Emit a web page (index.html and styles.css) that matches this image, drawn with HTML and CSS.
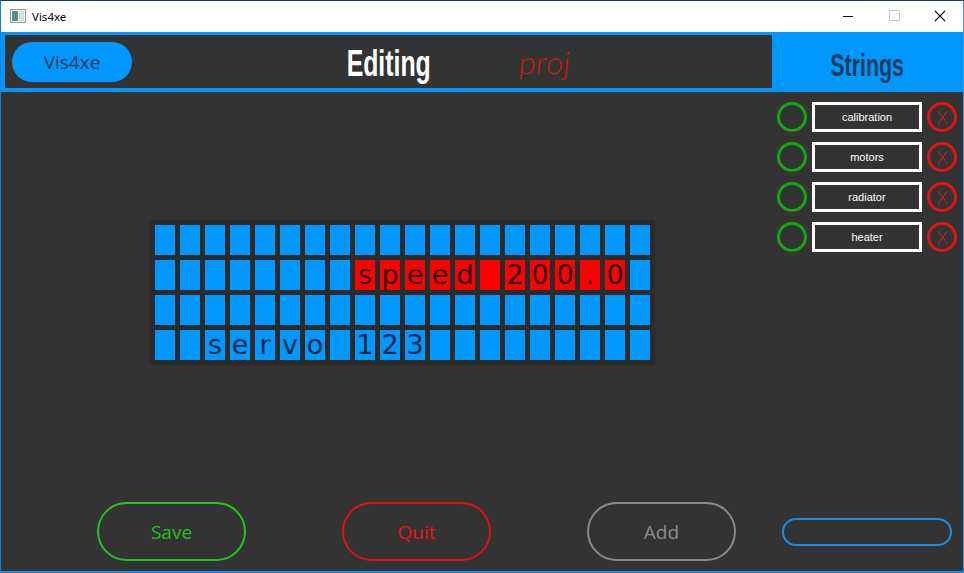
FILE: index.html
```html
<!DOCTYPE html>
<html lang="en">
<head>
<meta charset="utf-8">
<title>Vis4xe</title>
<link rel="stylesheet" href="styles.css">
</head>
<body>
<div class="window">
  <div class="titlebar">
    <svg class="app-icon" width="16" height="14" viewBox="0 0 16 14">
      <rect x="0.5" y="0.5" width="15" height="13" fill="#fff" stroke="#9a9a9a"/>
      <rect x="2" y="2" width="6" height="10" fill="#5d8a92"/>
      <rect x="9" y="2" width="5" height="10" fill="#d8dde0"/>
    </svg>
    <span class="title">Vis4xe</span>
    <span class="spacer"></span>
    <span class="cap-btn">
      <svg width="12" height="12" viewBox="0 0 12 12"><line x1="1" y1="6.5" x2="11" y2="6.5" stroke="#111" stroke-width="1"/></svg>
    </span>
    <span class="cap-btn">
      <svg width="12" height="12" viewBox="0 0 12 12"><rect x="1.5" y="0.5" width="10" height="10" fill="none" stroke="#c8c8c8" stroke-width="1"/></svg>
    </span>
    <span class="cap-btn">
      <svg width="12" height="12" viewBox="0 0 12 12"><path d="M1 1 L11 11 M11 1 L1 11" stroke="#111" stroke-width="1.1" fill="none"/></svg>
    </span>
  </div>

  <div class="header">
    <div class="header-main">
      <div class="header-dark">
        <div class="pill">Vis4xe</div>
        <div class="heading"><span class="narrow">Editing</span></div>
        <div class="proj">proj</div>
      </div>
    </div>
    <div class="header-tab"><span class="narrow">Strings</span></div>
  </div>

  <div class="content">
    <div class="main">
      <div class="lcd">
        <span class="c"></span><span class="c"></span><span class="c"></span><span class="c"></span><span class="c"></span><span class="c"></span><span class="c"></span><span class="c"></span><span class="c"></span><span class="c"></span><span class="c"></span><span class="c"></span><span class="c"></span><span class="c"></span><span class="c"></span><span class="c"></span><span class="c"></span><span class="c"></span><span class="c"></span><span class="c"></span>

        <span class="c"></span><span class="c"></span><span class="c"></span><span class="c"></span><span class="c"></span><span class="c"></span><span class="c"></span><span class="c"></span><span class="c r">s</span><span class="c r">p</span><span class="c r">e</span><span class="c r">e</span><span class="c r">d</span><span class="c r"></span><span class="c r">2</span><span class="c r">0</span><span class="c r">0</span><span class="c r">.</span><span class="c r">0</span><span class="c"></span>

        <span class="c"></span><span class="c"></span><span class="c"></span><span class="c"></span><span class="c"></span><span class="c"></span><span class="c"></span><span class="c"></span><span class="c"></span><span class="c"></span><span class="c"></span><span class="c"></span><span class="c"></span><span class="c"></span><span class="c"></span><span class="c"></span><span class="c"></span><span class="c"></span><span class="c"></span><span class="c"></span>

        <span class="c"></span><span class="c"></span><span class="c">s</span><span class="c">e</span><span class="c">r</span><span class="c">v</span><span class="c">o</span><span class="c"></span><span class="c">1</span><span class="c">2</span><span class="c">3</span><span class="c"></span><span class="c"></span><span class="c"></span><span class="c"></span><span class="c"></span><span class="c"></span><span class="c"></span><span class="c"></span><span class="c"></span>
      </div>
      <div class="buttons">
        <div class="btn btn-save">Save</div>
        <div class="btn btn-quit">Quit</div>
        <div class="btn btn-add">Add</div>
      </div>
    </div>

    <div class="side">
      <div class="row"><span class="ring ok"></span><span class="name">calibration</span><span class="ring del">X</span></div>
      <div class="row"><span class="ring ok"></span><span class="name">motors</span><span class="ring del">X</span></div>
      <div class="row"><span class="ring ok"></span><span class="name">radiator</span><span class="ring del">X</span></div>
      <div class="row"><span class="ring ok"></span><span class="name">heater</span><span class="ring del">X</span></div>
      <div class="entry"></div>
    </div>
  </div>
</div>
</body>
</html>
```

FILE: styles.css
```css
* { box-sizing: border-box; }

html, body {
  margin: 0;
  padding: 0;
  background: #333333;
}

.window {
  width: 964px;
  height: 573px;
  display: flex;
  flex-direction: column;
  border-top: 1px solid #1d3c5e;
  border-left: 1px solid #1a80d4;
  border-right: 1px solid #3c94dc;
  border-bottom: 2px solid #1a86dc;
  background: #333333;
  overflow: hidden;
}

/* title bar */
.titlebar {
  height: 31px;
  flex: none;
  background: #ffffff;
  display: flex;
  align-items: center;
  font-family: "Noto Sans", "Open Sans", sans-serif;
  font-size: 11.5px;
  color: #000;
}
.app-icon { margin-left: 9px; margin-top: -1px; }
.title { margin-left: 6px; margin-top: -1px; }
.spacer { flex: 1; }
.cap-btn {
  width: 46px;
  height: 31px;
  display: flex;
  align-items: center;
  justify-content: center;
}
.cap-btn svg { display: block; margin-top: -1px; }

/* header */
.header {
  height: 60px;
  flex: none;
  display: flex;
  background: #0097fe;
}
.header-main {
  width: 771px;
  padding: 3px 0 4px 4px;
  display: flex;
}
.header-dark {
  flex: 1;
  background: #333333;
  display: grid;
  grid-template-columns: 1fr 84px 1fr;
  align-items: center;
}
.pill {
  justify-self: start;
  margin-left: 7px;
  width: 120px;
  height: 40px;
  border-radius: 20px;
  background: #0097fe;
  color: #183a58;
  font-family: "Open Sans", "Noto Sans", sans-serif;
  font-size: 19px;
  display: flex;
  align-items: center;
  justify-content: center;
}
.narrow {
  display: inline-block;
  font-family: "Liberation Sans", sans-serif;
  font-weight: bold;
  transform: scaleX(0.67);
  white-space: nowrap;
}
.heading {
  display: flex;
  justify-content: center;
  font-size: 37px;
  color: #ffffff;
  line-height: 40px;
  padding-top: 5px;
}
.proj {
  justify-self: start;
  margin-left: 88px;
  font-family: "Lato", sans-serif;
  font-weight: 300;
  font-size: 31px;
  color: #c81818;
  line-height: 40px;
  transform: skewX(-6deg);
}
.header-tab {
  flex: 1;
  display: flex;
  align-items: center;
  justify-content: center;
  padding-top: 6px;
  font-size: 32px;
  color: #1b3c5c;
}

/* content */
.content {
  flex: 1;
  display: flex;
  min-height: 0;
}
.main {
  width: 771px;
  display: flex;
  flex-direction: column;
  padding: 128px 0 10px 149px;
}
.lcd {
  align-self: flex-start;
  display: grid;
  grid-template-columns: repeat(20, 20px);
  grid-auto-rows: 30px;
  gap: 5px;
  padding: 5px;
  background: #2b2b2b;
}
.c {
  background: #0097fe;
  color: #0c2a4a;
  font-family: "DejaVu Sans", sans-serif;
  font-size: 27px;
  line-height: 30px;
  text-align: center;
  overflow: visible;
  white-space: nowrap;
}
.c.r {
  background: #ff0000;
  color: #2a0505;
}

.buttons {
  margin-top: auto;
  margin-left: -53px;
  display: flex;
  gap: 96px;
}
.btn {
  width: 149px;
  height: 59px;
  border: 2px solid;
  border-radius: 30px;
  display: flex;
  align-items: center;
  justify-content: center;
  font-family: "Open Sans", "Noto Sans", sans-serif;
  font-size: 19px;
}
.btn-save { border-color: #1ec81e; color: #22c022; }
.btn-quit { border-color: #e01212; color: #e81414; }
.btn-add { border-color: #8a8a8a; color: #8c8c8c; }

/* side panel */
.side {
  flex: 1;
  display: flex;
  flex-direction: column;
  gap: 10px;
  padding: 10px 0 25px 5px;
}
.row {
  display: flex;
  gap: 5px;
  height: 30px;
}
.ring {
  width: 30px;
  height: 30px;
  border-radius: 50%;
  border: 3px solid;
  display: flex;
  align-items: center;
  justify-content: center;
  font-family: "Lato", sans-serif;
  font-weight: 300;
  font-size: 18px;
}
.ring.ok { border-color: #12a812; }
.ring.del { border-color: #e21414; color: #d41a1a; }
.name {
  width: 110px;
  height: 30px;
  border: 3px solid #ffffff;
  display: flex;
  align-items: center;
  justify-content: center;
  color: #ffffff;
  font-family: "Liberation Sans", sans-serif;
  font-size: 11px;
}
.entry {
  margin-top: auto;
  margin-left: 5px;
  width: 170px;
  height: 28px;
  border: 2px solid #1a8ee6;
  border-radius: 14px;
}
```
